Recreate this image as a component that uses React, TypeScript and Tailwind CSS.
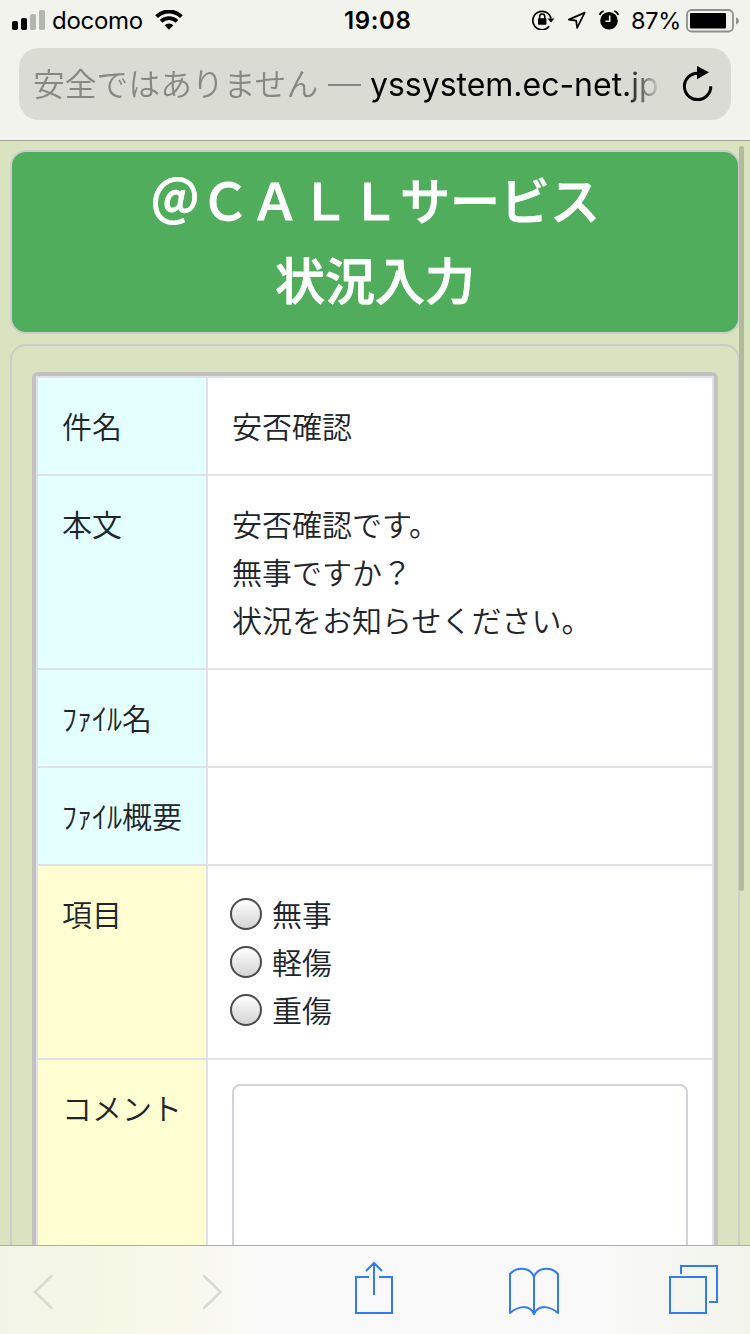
import type { ReactNode } from "react";

const StatusBar = () => (
  <div className="flex h-10 items-center pl-3 pr-[11px] font-['Inter','Liberation_Sans',sans-serif] text-black">
    <div className="flex w-[332px] items-center">
      <svg width="33" height="20" viewBox="0 0 33 20">
        <rect x="0" y="11" width="6" height="9" rx="1.8" />
        <rect x="9" y="8" width="6" height="12" rx="1.8" />
        <rect x="18" y="4" width="6" height="16" rx="1.8" fill="#b3b5af" />
        <rect x="27" y="0" width="6" height="20" rx="1.8" fill="#b3b5af" />
      </svg>
      <span className="ml-[7px] w-[96px] pt-[2px] text-[24px] tracking-[-0.3px]">docomo</span>
      <svg className="ml-[7px]" width="28" height="20" viewBox="0 0 28 20">
        <path d="M1.6 6.6a17.6 17.6 0 0 1 24.8 0" fill="none" stroke="#000" strokeWidth="4" />
        <path d="M6.1 11.3a11.3 11.3 0 0 1 15.8 0" fill="none" stroke="#000" strokeWidth="3.8" />
        <path d="M9.6 15.2a6.3 6.3 0 0 1 8.8 0L14 19.8z" />
      </svg>
    </div>
    <span className="pt-[2px] text-[24px] font-semibold tracking-[0.6px]">19:08</span>
    <div className="ml-auto flex items-center">
      <svg width="23" height="20" viewBox="0 0 23 20">
        <path d="M17.2 16.3A9.2 9.2 0 1 1 19 8.5" fill="none" stroke="#000" strokeWidth="1.7" />
        <path d="M15.4 8.4h7L19 12.6z" />
        <rect x="6" y="8.2" width="8.4" height="6.6" rx="0.8" />
        <path d="M7.6 9V6.7a2.6 2.6 0 0 1 5.2 0V9" fill="none" stroke="#000" strokeWidth="1.5" />
      </svg>
      <svg className="ml-[12px]" width="20" height="19" viewBox="0 0 20 19">
        <path d="M17.7 1.6L1.8 8.6l7.4 1.1.9 7.2z" fill="none" stroke="#000" strokeWidth="1.7" strokeLinejoin="round" />
      </svg>
      <svg className="ml-[12px]" width="20" height="20" viewBox="0 0 20 20">
        <circle cx="10" cy="10.7" r="8.8" />
        <path d="M10.7 5.5v5.8H6.4" fill="none" stroke="#f2f3ed" strokeWidth="1.6" />
        <path d="M.8 5A5.5 5.5 0 0 1 4.7 1M19.2 5A5.5 5.5 0 0 0 15.3 1" fill="none" stroke="#000" strokeWidth="1.8" />
      </svg>
      <span className="ml-[12px] w-[50px] whitespace-nowrap pt-[2px] text-[23.5px] tracking-[-0.3px]">87%</span>
      <svg className="ml-[5px] mt-px" width="53" height="24" viewBox="0 0 53 24">
        <rect x="1" y="1" width="46" height="21.5" rx="4.5" fill="none" stroke="#8f918d" strokeWidth="1.8" />
        <rect x="4" y="4" width="36" height="15.5" rx="1" />
        <path d="M50 8.2q3 1.2 3 3.7t-3 3.7z" fill="#8f918d" />
      </svg>
    </div>
  </div>
);

const AddressBar = () => (
  <div className="mx-[19px] mt-2 flex h-[72px] items-center rounded-[20px] bg-[#dadcd4] pl-[14px] font-['Inter','Noto_Sans_CJK_JP',sans-serif]">
    <div className="flex w-[628px] items-center overflow-hidden whitespace-nowrap [mask-image:linear-gradient(to_right,#000_592px,transparent_628px)]">
      <span className="-mt-[4px] w-[295px] shrink-0 font-['Noto_Sans_CJK_JP',sans-serif] text-[31.8px] font-[350] leading-[48px] text-[#868882]">安全ではありません</span>
      <span className="mt-[2px] h-[2.5px] w-[33px] shrink-0 bg-[#868882]" />
      <span className="ml-[9px] pt-[2px] text-[32px] leading-[48px] tracking-[-0.02px] text-black">yssystem.ec-net.jp</span>
    </div>
    <svg className="ml-[21px]" width="32" height="38" viewBox="0 0 32 38">
      <path d="M15.5 8.2A13.2 13.2 0 1 0 28.8 21.2" fill="none" stroke="#000" strokeWidth="3" />
      <path d="M15 1l12 6.3-12 7z" />
    </svg>
  </div>
);

const Row = ({ label, color, children }: { label: string; color: string; children?: ReactNode }) => (
  <tr>
    <th className={`w-[170px] border-2 border-[#dee2e6] px-6 pt-[23px] pb-[25px] text-left align-top font-[350] whitespace-nowrap ${color}`}>{label}</th>
    <td className="border-2 border-[#dee2e6] bg-white px-6 pt-[23px] pb-[25px] align-top">{children}</td>
  </tr>
);

const choices = ["無事", "軽傷", "重傷"];

const Page = () => (
  <main className="relative flex-1 overflow-hidden bg-[#d9e3bf] px-[10px] pt-[9px] font-['Noto_Sans_CJK_JP',sans-serif] text-[#212529]">
    <h1 className="h-[184px] w-[730px] rounded-2xl border-2 border-[#cccccc] bg-[#4fad5b] pt-[6px] text-center text-[50px] font-medium leading-[80px] text-white [-webkit-text-stroke:0.8px_#fff]">
      ＠ＣＡＬＬサービス
      <br />
      状況入力
    </h1>
    <div className="mt-[10px] h-[1200px] w-[730px] rounded-2xl border-2 border-[#cccccc] px-5 pt-[26px]">
      <div className="rounded-[6px] border-4 border-[#c3c2c0] bg-white">
        <table className="w-full table-fixed border-collapse text-[30px] font-[350] leading-[48px]">
          <tbody>
            <Row label="件名" color="bg-[#e3fffe]">安否確認</Row>
            <Row label="本文" color="bg-[#e3fffe]">
              安否確認です。
              <br />
              無事ですか？
              <br />
              状況をお知らせください。
            </Row>
            <Row label="ﾌｧｲﾙ名" color="bg-[#e3fffe]" />
            <Row label="ﾌｧｲﾙ概要" color="bg-[#e3fffe]" />
            <Row label="項目" color="bg-[#fffed2]">
              {choices.map((choice) => (
                <label key={choice} className="flex h-12 items-center">
                  <input
                    type="radio"
                    name="status"
                    className="-ml-[2px] mr-[10px] mt-[2px] size-8 appearance-none rounded-full border-2 border-[#4b4b4b] bg-linear-to-b from-white to-[#d4d4d4]"
                  />
                  {choice}
                </label>
              ))}
            </Row>
            <Row label="コメント" color="bg-[#fffed2]">
              <textarea className="mt-px block h-[300px] w-full resize-none rounded-lg border-2 border-[#ced4da] bg-white" />
            </Row>
          </tbody>
        </table>
      </div>
    </div>
    <div className="absolute right-[6px] top-[5px] h-[745px] w-[5px] rounded-full bg-[#b2ba9c]" />
  </main>
);

const Toolbar = () => (
  <nav className="flex h-[89px] shrink-0 items-start border-t border-[#adaea9] bg-[linear-gradient(to_right,#f2f4e8_0px,#f6f8e6_105px,#f7f8ea_180px,#f9f9f9_255px,#f9f9f9_600px,#f3f5ee_725px,#f2f4eb_750px)]">
    <svg className="ml-[33px] mt-[28px]" width="21" height="36" viewBox="0 0 21 36">
      <path d="M18.5 2L2 18l16.5 16" fill="none" stroke="#d9dbd0" strokeWidth="2.6" strokeLinecap="round" />
    </svg>
    <svg className="ml-[148px] mt-[28px]" width="21" height="36" viewBox="0 0 21 36">
      <path d="M2 2l16.5 16L2 34" fill="none" stroke="#d9dad3" strokeWidth="2.6" strokeLinecap="round" />
    </svg>
    <svg className="ml-[131px] mt-[14px]" width="40" height="56" viewBox="0 0 40 56" fill="none" stroke="#347af0" strokeWidth="2">
      <path d="M15 17H2v36h36V17H25M20 35V3M12 11l8-8 8 8" />
    </svg>
    <svg className="ml-[114px] mt-[20px]" width="52" height="52" viewBox="0 0 52 52" fill="none" stroke="#347af0" strokeWidth="2">
      <path d="M26 11C22 0 8 1 2 8v39c8-7 19-9 24 1 5-10 16-8 24-1V8C44 1 30 0 26 11z" strokeLinejoin="round" />
      <path d="M26 11v38" />
    </svg>
    <svg className="ml-[108px] mt-[18px]" width="52" height="52" viewBox="0 0 52 52" fill="none" stroke="#347af0" strokeWidth="2">
      <path d="M2 13h36v36H2zM13 10V2h36v36h-8" />
    </svg>
  </nav>
);

export default function App() {
  return (
    <div className="flex h-[1334px] w-[750px] flex-col overflow-hidden">
      <header className="h-[141px] shrink-0 border-b border-[#9c9f92] bg-[#f2f3ed]">
        <StatusBar />
        <AddressBar />
      </header>
      <Page />
      <Toolbar />
    </div>
  );
}
